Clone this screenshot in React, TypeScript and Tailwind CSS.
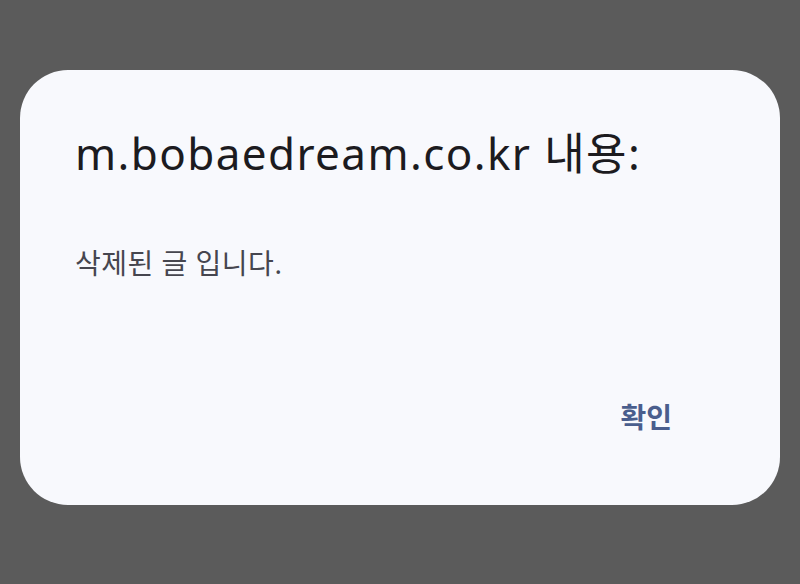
export default function App() {
  return (
    <div className="w-[800px] h-[584px] bg-[#5b5b5b] pt-[70px] px-[20px]" style={{ fontFamily: '"Noto Sans", "Noto Sans CJK KR", sans-serif' }}>
      <div className="w-[760px] h-[435px] bg-[#f8f9fd] rounded-[48px] pl-[55px] pr-[108px] pt-[55px] flex flex-col">
        <h1 className="text-[44px] leading-[56px] tracking-[1.4px] text-[#1c1b1f] font-normal whitespace-nowrap">m.bobaedream.co.kr 내용:</h1>
        <p className="mt-[64px] text-[28px] leading-[36px] tracking-[0.5px] text-[#46464f]">삭제된 글 입니다.</p>
        <div className="mt-auto mb-[68px] flex justify-end">
          <button className="text-[28px] leading-[40px] font-semibold text-[#4a5e8d]">확인</button>
        </div>
      </div>
    </div>
  );
}
